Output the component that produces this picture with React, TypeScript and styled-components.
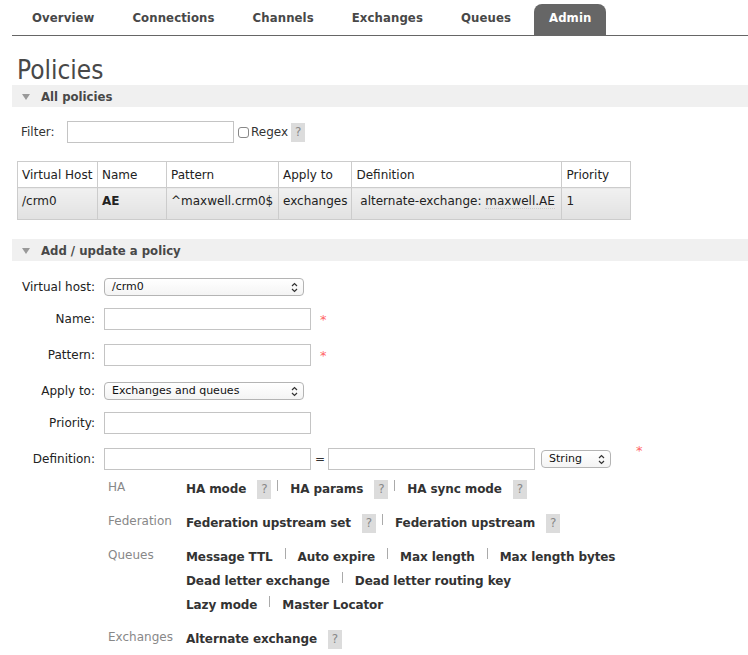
import React from "react"
import styled, { createGlobalStyle } from "styled-components"

const GlobalStyle = createGlobalStyle`
  body {
    margin: 0;
    background: #fff;
    font-family: "DejaVu Sans", Verdana, sans-serif;
    font-size: 12px;
    color: #333;
  }
`

const Page = styled.div`
  padding-left: 12px;
  overflow: hidden;
`

const Tabs = styled.ul`
  display: flex;
  list-style: none;
  margin: 0;
  padding: 4px 0 0 5px;
  border-bottom: 1px solid #666;
`

const Tab = styled.li<{ $active?: boolean }>`
  margin-right: 8px;
  padding: 0 15px;
  height: 31px;
  line-height: 28px;
  border-radius: 8px 8px 0 0;
  font-family: "DejaVu Sans Condensed", "DejaVu Sans", sans-serif;
  font-weight: bold;
  font-size: 13px;
  letter-spacing: 0.1px;
  color: ${(p) => (p.$active ? "#fff" : "#484848")};
  background: ${(p) => (p.$active ? "#666" : "transparent")};
`

const Title = styled.h1`
  margin: 20px 0 1px 5px;
  font-family: "DejaVu Sans Condensed", "DejaVu Sans", sans-serif;
  font-weight: normal;
  font-size: 26px;
  line-height: 28px;
  color: #484848;
`

const SectionBar = styled.div`
  display: flex;
  align-items: center;
  height: 22px;
  margin-right: -20px;
  background: #f0f0f0;
  font-family: "DejaVu Sans Condensed", "DejaVu Sans", sans-serif;
  font-weight: bold;
  font-size: 13px;
  color: #484848;
`

const Arrow = styled.span`
  width: 0;
  height: 0;
  margin: 1px 11px 0 10px;
  border-left: 4px solid transparent;
  border-right: 4px solid transparent;
  border-top: 6px solid #999;
`

const FilterRow = styled.div`
  display: flex;
  align-items: center;
  margin: 14px 0 0 9px;
`

const FilterLabel = styled.label`
  width: 46px;
`

const TextInput = styled.input<{ $w: number }>`
  box-sizing: border-box;
  width: ${(p) => p.$w}px;
  height: 22px;
  margin: 0;
  border: 1px solid #c4c4c4;
  background: #fff;
  font: inherit;
`

const Check = styled.span`
  box-sizing: border-box;
  width: 11px;
  height: 11px;
  margin: 1px 2px 0 4px;
  border: 1px solid #888;
  border-radius: 3px;
  background: #fff;
`

const HelpBox = styled.span`
  display: inline-flex;
  align-items: center;
  justify-content: center;
  width: 14px;
  height: 19px;
  margin-left: 3px;
  background: #dcdcdc;
  color: #888;
  font-weight: normal;
  font-size: 12px;
`

const Table = styled.table`
  margin: 18px 0 19px 5px;
  border-collapse: collapse;
`

const Th = styled.th<{ $w: number }>`
  width: ${(p) => p.$w}px;
  box-sizing: border-box;
  padding: 0 4px;
  height: 26px;
  border: 1px solid #ccc;
  text-align: left;
  font-weight: normal;
  color: #222;
`

const Td = styled.td<{ $bold?: boolean }>`
  padding: 0 4px 6px 4px;
  height: 25px;
  border: 1px solid #ccc;
  background: linear-gradient(#f1f1f1, #e1e1e1);
  font-weight: ${(p) => (p.$bold ? "bold" : "normal")};
  color: #222;
  white-space: nowrap;
`

const Dotted = styled.span`
  border-bottom: 1px dotted #ccc;
`

const Form = styled.div`
  display: grid;
  grid-template-columns: 83px auto;
  column-gap: 9px;
  align-items: center;
  margin-top: 12px;
`

const Label = styled.label`
  text-align: right;
  color: #222;
`

const Field = styled.div<{ $h: number }>`
  display: flex;
  align-items: center;
  height: ${(p) => p.$h}px;
`

const SelectWrap = styled.div<{ $w: number }>`
  position: relative;
  box-sizing: border-box;
  width: ${(p) => p.$w}px;
  height: 18px;
  padding-left: 7px;
  border: 1px solid #b4b4b4;
  border-radius: 4px;
  background: linear-gradient(#fff, #f4f4f4);
  font-size: 11px;
  line-height: 16px;
  color: #111;
`

const Chevrons = styled.svg`
  position: absolute;
  right: 5px;
  top: 3px;
`

const Star = styled.span<{ $gap?: number; $raised?: boolean }>`
  align-self: ${(p) => (p.$raised ? "flex-start" : "center")};
  margin-top: ${(p) => (p.$raised ? 6 : 0)}px;
  margin-left: ${(p) => p.$gap ?? 9}px;
  color: #f66;
  font-size: 13px;
`

const Equals = styled.span`
  margin: 0 3px 0 4px;
`

const Gap = styled.span<{ $w: number }>`
  width: ${(p) => p.$w}px;
`

const Help = styled.div`
  grid-column: 2;
  display: grid;
  grid-template-columns: 78px auto;
  row-gap: 10px;
  margin-top: -4px;
  padding-left: 4px;
`

const Category = styled.div`
  padding-top: 2px;
  font-size: 12px;
  line-height: 16px;
  color: #888;
`

const Lines = styled.div``

const Line = styled.div`
  display: flex;
  align-items: center;
  height: 24px;
  font-weight: bold;
  letter-spacing: -0.1px;
  color: #333;
`

const Sep = styled.span<{ $near?: boolean }>`
  align-self: flex-start;
  width: 1px;
  height: 11px;
  margin: 3px 12px 0 ${(p) => (p.$near ? 6 : 12)}px;
  background: #aaa;
`

const HelpLink = styled(HelpBox)`
  margin-left: 11px;
`

type Item = { text: string; help?: boolean }

const helpGroups: { name: string; lines: Item[][] }[] = [
  {
    name: "HA",
    lines: [[{ text: "HA mode", help: true }, { text: "HA params", help: true }, { text: "HA sync mode", help: true }]],
  },
  {
    name: "Federation",
    lines: [[{ text: "Federation upstream set", help: true }, { text: "Federation upstream", help: true }]],
  },
  {
    name: "Queues",
    lines: [
      [{ text: "Message TTL" }, { text: "Auto expire" }, { text: "Max length" }, { text: "Max length bytes" }],
      [{ text: "Dead letter exchange" }, { text: "Dead letter routing key" }],
      [{ text: "Lazy mode" }, { text: "Master Locator" }],
    ],
  },
  {
    name: "Exchanges",
    lines: [[{ text: "Alternate exchange", help: true }]],
  },
]

const tabs = ["Overview", "Connections", "Channels", "Exchanges", "Queues", "Admin"]

const columns = [
  { title: "Virtual Host", width: 80 },
  { title: "Name", width: 69 },
  { title: "Pattern", width: 112 },
  { title: "Apply to", width: 73 },
  { title: "Definition", width: 210 },
  { title: "Priority", width: 69 },
]

const Select = ({ value, width }: { value: string; width: number }) => (
  <SelectWrap $w={width}>
    {value}
    <Chevrons width="7" height="11" viewBox="0 0 7 11">
      <path d="M1 4 L3.5 1.5 L6 4 M1 7 L3.5 9.5 L6 7" fill="none" stroke="#333" strokeWidth="1.2" />
    </Chevrons>
  </SelectWrap>
)

export default function App() {
  return (
    <Page>
      <GlobalStyle />
      <Tabs>
        {tabs.map((t) => (
          <Tab key={t} $active={t === "Admin"}>
            {t}
          </Tab>
        ))}
      </Tabs>

      <Title>Policies</Title>
      <SectionBar>
        <Arrow />
        All policies
      </SectionBar>

      <FilterRow>
        <FilterLabel>Filter:</FilterLabel>
        <TextInput $w={167} />
        <Check />
        Regex
        <HelpBox>?</HelpBox>
      </FilterRow>

      <Table>
        <thead>
          <tr>
            {columns.map((c) => (
              <Th key={c.title} $w={c.width}>
                {c.title}
              </Th>
            ))}
          </tr>
        </thead>
        <tbody>
          <tr>
            <Td>/crm0</Td>
            <Td $bold>AE</Td>
            <Td>^maxwell.crm0$</Td>
            <Td>exchanges</Td>
            <Td>
              &nbsp;alternate-exchange: <Dotted>maxwell.AE</Dotted>
            </Td>
            <Td>1</Td>
          </tr>
        </tbody>
      </Table>

      <SectionBar>
        <Arrow />
        Add / update a policy
      </SectionBar>

      <Form>
        <Label>Virtual host:</Label>
        <Field $h={28}>
          <Select value="/crm0" width={200} />
        </Field>

        <Label>Name:</Label>
        <Field $h={36}>
          <TextInput $w={207} />
          <Star>*</Star>
        </Field>

        <Label>Pattern:</Label>
        <Field $h={36}>
          <TextInput $w={207} />
          <Star>*</Star>
        </Field>

        <Label>Apply to:</Label>
        <Field $h={36}>
          <Select value="Exchanges and queues" width={200} />
        </Field>

        <Label>Priority:</Label>
        <Field $h={28}>
          <TextInput $w={207} />
        </Field>

        <Label>Definition:</Label>
        <Field $h={44}>
          <TextInput $w={207} />
          <Equals>=</Equals>
          <TextInput $w={207} />
          <Gap $w={6} />
          <Select value="String" width={70} />
          <Star $gap={25} $raised>
            *
          </Star>
        </Field>

        <Help>
          {helpGroups.map((g) => (
            <React.Fragment key={g.name}>
              <Category>{g.name}</Category>
              <Lines>
                {g.lines.map((line, i) => (
                  <Line key={i}>
                    {line.map((item, j) => (
                      <React.Fragment key={item.text}>
                        {j > 0 && <Sep $near={line[j - 1].help} />}
                        {item.text}
                        {item.help && <HelpLink>?</HelpLink>}
                      </React.Fragment>
                    ))}
                  </Line>
                ))}
              </Lines>
            </React.Fragment>
          ))}
        </Help>
      </Form>
    </Page>
  )
}
